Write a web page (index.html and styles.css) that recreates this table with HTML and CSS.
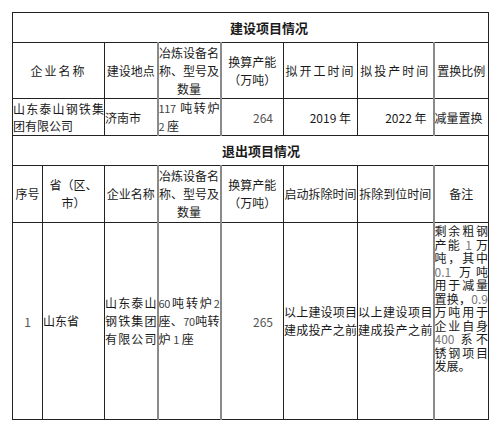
FILE: index.html
```html
<!DOCTYPE html>
<html lang="zh-CN">
<head>
<meta charset="utf-8">
<link rel="stylesheet" href="styles.css">
</head>
<body>
<table class="sheet">
  <colgroup>
    <col class="c1"><col class="c2"><col class="c3"><col class="c4"><col class="c5"><col class="c6"><col class="c7"><col class="c8">
  </colgroup>
  <tr class="r-title">
    <td colspan="8" class="title t1">建设项目情况</td>
  </tr>
  <tr class="r-head">
    <td colspan="2" class="hd"><span class="sp">企业名称</span></td>
    <td class="hd">建设地点</td>
    <td class="hd g"><span class="ln">冶炼设备名</span><span class="ln">称、型号及</span><span class="ln">数量</span></td>
    <td class="hd g"><span class="ln">换算产能</span><span class="ln">（万吨）</span></td>
    <td class="hd"><span class="sp">拟开工时间</span></td>
    <td class="hd"><span class="sp">拟投产时间</span></td>
    <td class="hd g">置换比例</td>
  </tr>
  <tr class="r-data1">
    <td colspan="2" class="txt"><span class="ln jf">山东泰山钢铁集</span><span class="ln">团有限公司</span></td>
    <td class="txt">济南市</td>
    <td class="txt g"><span class="ln jf"><i class="d">117</i> 吨转炉</span><span class="ln"><i class="d">2</i> 座</span></td>
    <td class="num g light">264</td>
    <td class="num">2019 年</td>
    <td class="num">2022 年</td>
    <td class="txt g">减量置换</td>
  </tr>
  <tr class="r-title">
    <td colspan="8" class="title t2">退出项目情况</td>
  </tr>
  <tr class="r-head2">
    <td class="hd">序号</td>
    <td class="hd"><span class="ln">省（区、</span><span class="ln">市）</span></td>
    <td class="hd">企业名称</td>
    <td class="hd g"><span class="ln">冶炼设备名</span><span class="ln">称、型号及</span><span class="ln">数量</span></td>
    <td class="hd g"><span class="ln">换算产能</span><span class="ln">（万吨）</span></td>
    <td class="hd">启动拆除时间</td>
    <td class="hd">拆除到位时间</td>
    <td class="hd g">备注</td>
  </tr>
  <tr class="r-data2">
    <td class="ctr light">1</td>
    <td class="txt">山东省</td>
    <td class="txt"><span class="ln jf">山东泰山</span><span class="ln jf">钢铁集团</span><span class="ln jf">有限公司</span></td>
    <td class="txt g"><span class="ln jf"><i class="d">60</i>吨转炉<i class="d">2</i></span><span class="ln jf">座、<i class="d">70</i>吨转</span><span class="ln">炉 <i class="d">1</i> 座</span></td>
    <td class="num g light">265</td>
    <td class="txt"><span class="ln jf">以上建设项目</span><span class="ln jf">建成投产之前</span></td>
    <td class="txt"><span class="ln jf">以上建设项目</span><span class="ln jf">建成投产之前</span></td>
    <td class="note g">
      <span class="ln jf">剩余粗钢</span>
      <span class="ln jf">产能 <i>1</i> 万</span>
      <span class="ln jf">吨，其中</span>
      <span class="ln jf"><i>0.1</i> 万吨</span>
      <span class="ln jf">用于减量</span>
      <span class="ln jf">置换，<i>0.9</i></span>
      <span class="ln jf">万吨用于</span>
      <span class="ln jf">企业自身</span>
      <span class="ln jf"><i>400</i> 系不</span>
      <span class="ln jf">锈钢项目</span>
      <span class="ln">发展。</span>
    </td>
  </tr>
</table>
</body>
</html>
```
FILE: styles.css
```css
html, body {
  margin: 0;
  padding: 0;
  background: #ffffff;
}
body {
  font-family: "Noto Sans CJK SC", "Noto Sans", sans-serif;
  font-size: 12px;
  color: #1a1a1a;
}
.sheet {
  margin: 12px 0 0 12px;
  width: 476px;
  table-layout: fixed;
  border-collapse: collapse;
}
.c1 { width: 30px; }
.c2 { width: 62px; }
.c3 { width: 53px; }
.c4 { width: 63px; }
.c5 { width: 63px; }
.c6 { width: 74px; }
.c7 { width: 76px; }
.c8 { width: 55px; }

.sheet td {
  border: 1px solid #222;
  padding: 0;
  vertical-align: middle;
  white-space: nowrap;
  overflow: hidden;
}
.sheet td.g {
  border-left: 2px solid #8a8a8a;
}
.r-title { height: 30px; }
.r-head { height: 56px; }
.r-data1 { height: 35px; }
.r-head2 { height: 57px; }
.r-data2 { height: 197px; }

.title {
  font-weight: 700;
  font-size: 13px;
  text-align: left;
}
.t1 { padding-left: 217px !important; }
.t2 { padding-left: 209px !important; }

.hd {
  text-align: center;
  line-height: 18px;
}
.sp { letter-spacing: 2px; }
.txt {
  text-align: left;
  line-height: 17px;
}
.r-data2 .txt { line-height: 18px; }
.num {
  text-align: right;
  padding-right: 6px !important;
}
.num.light {
  padding-right: 10px !important;
}
.light { color: #555; }
.ctr { text-align: center; }
.note {
  vertical-align: top !important;
  padding-top: 1px !important;
  line-height: 13.5px;
}
.ln {
  display: block;
  white-space: nowrap;
}
.jf {
  text-align: justify;
  text-align-last: justify;
}
.ln i {
  font-style: normal;
  color: #777;
}
.ln i.d {
  color: #444;
  font-size: 11px;
  letter-spacing: -0.3px;
}
```
